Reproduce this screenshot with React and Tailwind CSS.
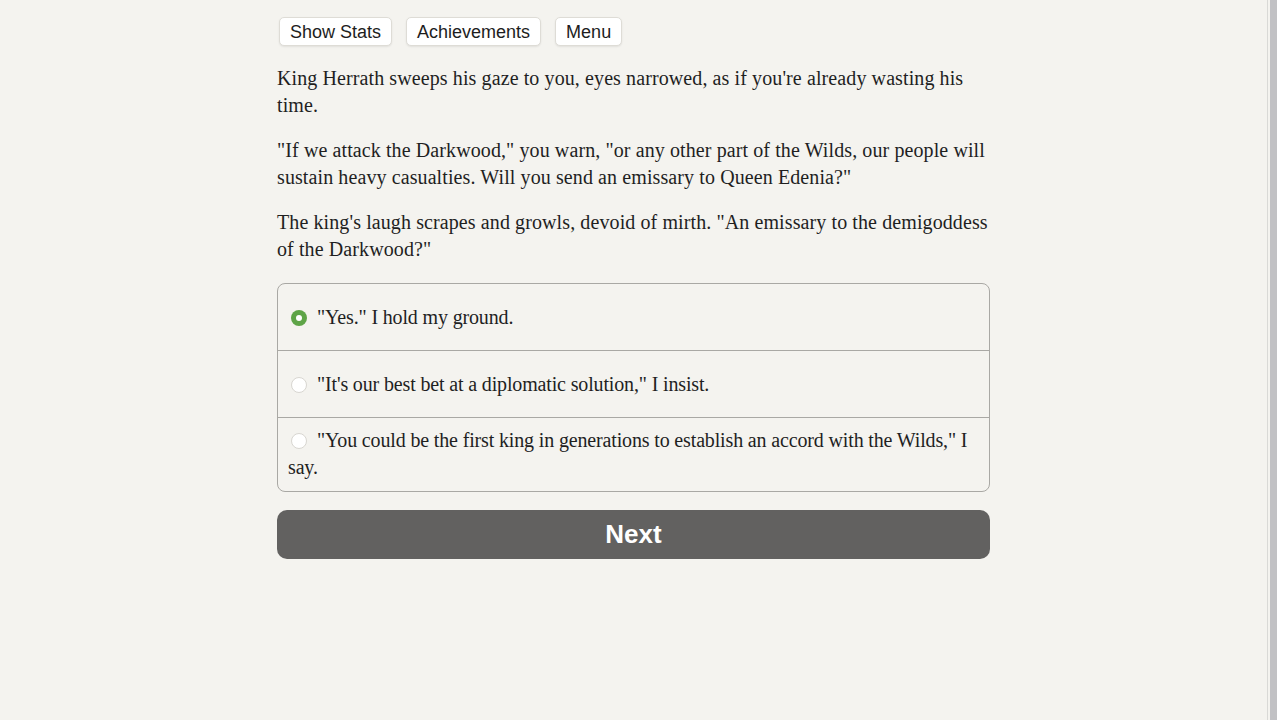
import React, { useState } from 'react'

const serif = { fontFamily: '"Liberation Serif", "DejaVu Serif", serif' }

const choices = [
    { id: 'yes', text: '"Yes." I hold my ground.', pad: 'py-[19.5px]' },
    {
        id: 'best',
        text: '"It\'s our best bet at a diplomatic solution," I insist.',
        pad: 'py-[19.5px]',
    },
    {
        id: 'accord',
        text: '"You could be the first king in generations to establish an accord with the Wilds," I say.',
        pad: 'pt-[9px] pb-[10px]',
    },
]

function TopButton({ children }) {
    return (
        <button className="h-[29px] rounded-[5px] border border-[#dedcd6] bg-white px-[10px] pt-[1px] text-[18px] leading-none text-[#1d1d1d] shadow-[0_1px_2px_rgba(0,0,0,0.08)]">
            {children}
        </button>
    )
}

function Radio({ checked }) {
    return checked ? (
        <span className="ml-[3px] mr-[10px] inline-flex h-[16px] w-[16px] -translate-y-[1px] items-center justify-center rounded-full bg-[#5ea447] align-middle">
            <span className="h-[6px] w-[6px] rounded-full bg-white" />
        </span>
    ) : (
        <span className="ml-[3px] mr-[10px] inline-block h-[16px] w-[16px] -translate-y-[1px] rounded-full border border-[#d8d6d1] bg-white align-middle" />
    )
}

export default function App() {
    const [selected, setSelected] = useState('yes')

    return (
        <div className="flex min-h-[720px] bg-[#f4f3ef]">
            <div className="flex flex-1 justify-center">
                <div className="w-[713px] pt-[17px]">
                    {/* Top buttons */}
                    <div className="flex gap-[14px] pl-[2px] font-['Liberation_Sans',Arial,sans-serif]">
                        <TopButton>Show Stats</TopButton>
                        <TopButton>Achievements</TopButton>
                        <TopButton>Menu</TopButton>
                    </div>

                    {/* Story text */}
                    <div
                        className="mt-[19px] text-[20px] leading-[27px] tracking-[0.1px] text-[#1f1f1f]"
                        style={serif}
                    >
                        <p>
                            King Herrath sweeps his gaze to you, eyes narrowed,
                            as if you're already wasting his time.
                        </p>
                        <p className="mt-[18px]">
                            "If we attack the Darkwood," you warn, "or any other
                            part of the Wilds, our people will sustain heavy
                            casualties. Will you send an emissary to Queen
                            Edenia?"
                        </p>
                        <p className="mt-[18px]">
                            The king's laugh scrapes and growls, devoid of
                            mirth. "An emissary to the demigoddess of the
                            Darkwood?"
                        </p>

                        {/* Choices */}
                        <div className="mt-[20px] overflow-hidden rounded-[8px] border border-[#a9a8a4] tracking-[-0.15px]">
                            {choices.map((c, i) => (
                                <label
                                    key={c.id}
                                    onClick={() => setSelected(c.id)}
                                    className={`block cursor-pointer px-[10px] ${c.pad} ${
                                        i > 0 ? 'border-t border-[#a9a8a4]' : ''
                                    }`}
                                >
                                    <Radio checked={selected === c.id} />
                                    {c.text}
                                </label>
                            ))}
                        </div>
                    </div>

                    {/* Next button */}
                    <button className="mt-[18px] h-[49px] w-full rounded-[10px] bg-[#626160] font-['Liberation_Sans',Arial,sans-serif] text-[26px] font-bold text-white">
                        Next
                    </button>
                </div>
            </div>

            {/* Scrollbar strip */}
            <div className="flex w-[13px] border-l border-[#d9d9d6] bg-[#f4f3ef]">
                <div className="ml-[2px] w-[7px] bg-[#c1c1c4]" />
                <div className="flex-1 bg-white" />
            </div>
        </div>
    )
}
